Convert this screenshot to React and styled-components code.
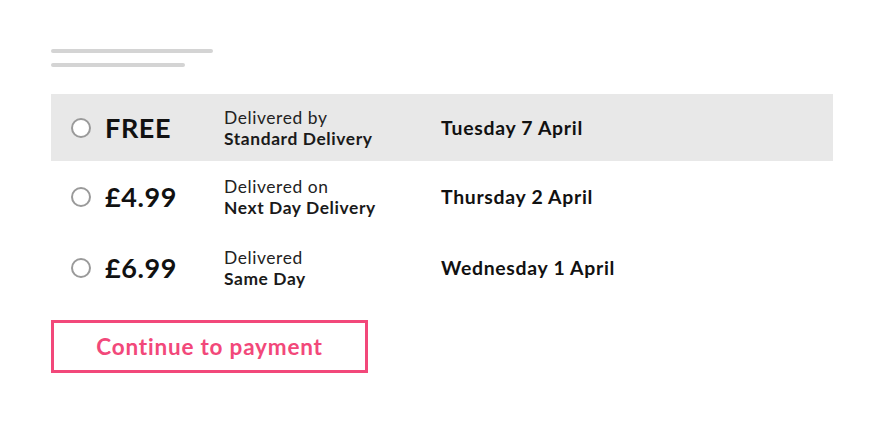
import React, { useState } from 'react';
import styled, { createGlobalStyle } from 'styled-components';

const GlobalStyle = createGlobalStyle`
    body {
        margin: 0;
        background: #ffffff;
        font-family: Lato, 'Liberation Sans', sans-serif;
        color: #1a1a1a;
    }
`

const Page = styled.div`
    width: 884px;
    height: 428px;
    padding: 49px 51px 0 51px;
    box-sizing: border-box;
    display: flex;
    flex-direction: column;
`

const Skeleton = styled.div`
    display: flex;
    flex-direction: column;
    gap: 10px;
    margin-bottom: 27px;
`

const SkeletonLine = styled.div`
    width: ${(props) => props.width}px;
    height: 4px;
    border-radius: 2px;
    background: #d4d4d4;
`

const Options = styled.div`
    width: 782px;
    display: flex;
    flex-direction: column;
`

const OptionRow = styled.label`
    display: flex;
    align-items: center;
    height: ${(props) => props.height || 71}px;
    background: ${(props) => (props.selected ? '#e8e8e8' : 'transparent')};
    cursor: pointer;
`

const Radio = styled.span`
    width: 20px;
    height: 20px;
    box-sizing: border-box;
    border: 2px solid #9a9a9a;
    border-radius: 50%;
    background: #ffffff;
    margin-left: 20px;
    margin-right: 14px;
    flex-shrink: 0;
`

const Price = styled.div`
    width: 119px;
    font-size: 27px;
    font-weight: 700;
    color: #111;
    letter-spacing: 0.6px;
`

const Method = styled.div`
    width: 217px;
    display: flex;
    flex-direction: column;
    font-size: 17.4px;
    line-height: 21px;
    letter-spacing: 0.6px;
`

const MethodLabel = styled.span`
    font-weight: 400;
    color: #222;
`

const MethodName = styled.span`
    font-weight: 700;
    color: #1a1a1a;
`

const DateText = styled.div`
    font-size: 19.4px;
    font-weight: 700;
    color: #111;
    letter-spacing: 0.7px;
`

const ContinueButton = styled.button`
    margin-top: 17px;
    width: 317px;
    height: 53px;
    border: 3px solid #f2487a;
    background: #ffffff;
    color: #f2487a;
    font-family: Lato, 'Liberation Sans', sans-serif;
    font-size: 22.5px;
    font-weight: 700;
    letter-spacing: 0.8px;
    cursor: pointer;
    padding: 0;
`

const options = [
    { price: 'FREE', label: 'Delivered by', name: 'Standard Delivery', date: 'Tuesday 7 April' },
    { price: '£4.99', label: 'Delivered on', name: 'Next Day Delivery', date: 'Thursday 2 April' },
    { price: '£6.99', label: 'Delivered', name: 'Same Day', date: 'Wednesday 1 April' },
]

const App = () => {
    const [selected] = useState(0)

    return (
        <Page>
            <GlobalStyle />
            <Skeleton>
                <SkeletonLine width={162} />
                <SkeletonLine width={134} />
            </Skeleton>
            <Options>
                {options.map((o, i) => (
                    <OptionRow key={o.price} selected={i === selected} height={i === 0 ? 67 : 71}>
                        <Radio />
                        <Price>{o.price}</Price>
                        <Method>
                            <MethodLabel>{o.label}</MethodLabel>
                            <MethodName>{o.name}</MethodName>
                        </Method>
                        <DateText>{o.date}</DateText>
                    </OptionRow>
                ))}
            </Options>
            <ContinueButton>Continue to payment</ContinueButton>
        </Page>
    )
}

export default App;
